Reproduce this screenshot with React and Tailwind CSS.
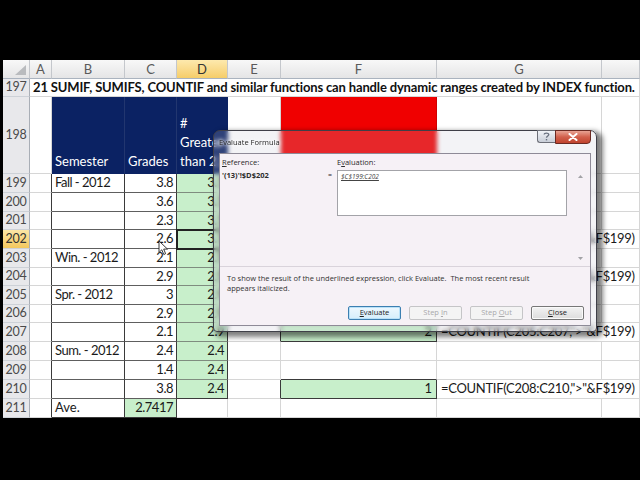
import React from 'react';

const wR = 'w-[27px]';
const wA = 'w-[22px]';
const wB = 'w-[73px]';
const wC = 'w-[52px]';
const wD = 'w-[51px]';
const wE = 'w-[53px]';
const wF = 'w-[156px]';
const wG = 'w-[165px]';
const wH = 'w-[38px]';
const wGH = 'w-[203px]';
const wAH = 'w-[610px]';

const LG = 'border-r-[#d6d6d6]';
const LGB = 'border-b-[#d6d6d6]';
const DK = 'border-r-[#3a3a3a]';
const DKB = 'border-b-[#3a3a3a]';
const MDB = 'border-b-[#5e5e5e]';

function Cell({ w, r = LG, b = LGB, cls = '', children }) {
  return (
    <div
      className={`${w} shrink-0 h-full border-r border-b ${r} ${b} flex items-center whitespace-nowrap overflow-hidden ${cls}`}
    >
      {children}
    </div>
  );
}

function Row({ h, num, sel, children }) {
  return (
    <div className={`flex ${h}`}>
      <Cell
        w={wR}
        r="border-r-[#a9aeb6]"
        b="border-b-[#cdd1d7]"
        cls={
          sel
            ? 'justify-center bg-linear-to-b from-[#fce6a6] to-[#f4c85c] text-[#333] text-[12.5px] tracking-[-0.2px]'
            : 'justify-center bg-[#e8e8eb] text-[#4a4a4a] text-[12.5px] tracking-[-0.2px]'
        }
      >
        {num}
      </Cell>
      {children}
    </div>
  );
}

const rows = [
  { n: 199, h: 'h-[19px]', b: 'Fall - 2012', c: '3.8', d: '3.1', f: '2.5' },
  { n: 200, h: 'h-[19px]', c: '3.6', d: '3.1' },
  { n: 201, h: 'h-[18px]', c: '2.3', d: '3.1' },
  { n: 202, h: 'h-[19px]', c: '2.6', d: '3.1', f: '3', g: '=COUNTIF(C199:C202,">"&F$199)', sel: true },
  { n: 203, h: 'h-[19px]', b: 'Win. - 2012', c: '2.1', d: '2.5' },
  { n: 204, h: 'h-[18px]', c: '2.9', d: '2.5', f: '1', g: '=COUNTIF(C203:C204,">"&F$199)' },
  { n: 205, h: 'h-[19px]', b: 'Spr. - 2012', c: '3', d: '2.9' },
  { n: 206, h: 'h-[18px]', c: '2.9', d: '2.9' },
  { n: 207, h: 'h-[19px]', c: '2.1', d: '2.9', f: '2', g: '=COUNTIF(C205:C207,">"&F$199)' },
  { n: 208, h: 'h-[19px]', b: 'Sum. - 2012', c: '2.4', d: '2.4' },
  { n: 209, h: 'h-[19px]', c: '1.4', d: '2.4' },
  { n: 210, h: 'h-[19px]', c: '3.8', d: '2.4', f: '1', g: '=COUNTIF(C208:C210,">"&F$199)' },
];

function HeadCell({ w, sel, children }) {
  return (
    <Cell
      w={w}
      r="border-r-[#c4c7cc]"
      b="border-b-[#aab3bf]"
      cls={
        sel
          ? 'justify-center pt-[2px] bg-linear-to-b from-[#fde9ad] to-[#f6cd68] text-[#333] text-[13px]'
          : 'justify-center pt-[2px] bg-linear-to-b from-[#f8f8f8] to-[#e5e5e6] text-[#5a5a5a] text-[13px]'
      }
    >
      {children}
    </Cell>
  );
}

function Btn({ w = 'w-[53px]', kind, children }) {
  const k =
    kind === 'focus'
      ? 'border-[#3c7fb1] bg-linear-to-b from-[#eef8fe] to-[#d6eefb] text-[#1e1e1e] shadow-[inset_0_0_0_1px_#b9e1f8]'
      : kind === 'dis'
      ? 'border-[#c5c5c7] bg-[#f4f4f4] text-[#a9a9ab]'
      : 'border-[#777] bg-linear-to-b from-[#f3f3f3] to-[#dcdcdc] text-[#1e1e1e] shadow-[inset_0_0_0_1px_#fafafa]';
  return (
    <div className={`${w} h-[14px] border rounded-[2px] flex items-center justify-center text-[7.5px] leading-none ${k}`}>
      {children}
    </div>
  );
}

function Dialog() {
  return (
    <div className="absolute z-20 left-[213px] top-[130px] w-[384px] h-[202px] rounded-t-[7px] rounded-b-[4px] border border-[#3f3f48] bg-[#c4c2d4]/20 backdrop-blur-[2px] shadow-[4px_3px_5px_2px_rgba(0,0,0,0.5)] flex flex-col px-[5px] pb-[5px] [font-family:'Open_Sans','Noto_Sans',sans-serif]">
      <div className="h-[22px] shrink-0 flex items-start justify-between">
        <span className="pl-[0px] pt-[6px] text-[7.5px] leading-[10px] text-[#1f1f1f] [text-shadow:0_0_5px_#fff,0_0_3px_#fff]">
          Evaluate Formula
        </span>
        <div className="flex -mt-[1px]">
          <div className="w-[18px] h-[13px] rounded-bl-[3px] border border-[#6d6f78] border-r-0 bg-linear-to-b from-[#f1f3f7] to-[#c9ced8] flex items-center justify-center">
            <svg width="7" height="9" viewBox="0 0 7 9">
              <path d="M1.2 2.6 C1.2 0.6 5.8 0.6 5.8 2.6 C5.8 4 3.5 4 3.5 5.8" fill="none" stroke="#6b7280" strokeWidth="1.3" />
              <rect x="2.8" y="7" width="1.4" height="1.4" fill="#6b7280" />
            </svg>
          </div>
          <div className="w-[36px] h-[14px] rounded-br-[4px] border border-[#6b2a22] bg-linear-to-b from-[#e8a394] via-[#d2604c] to-[#c0432d] flex items-center justify-center">
            <svg width="10" height="8" viewBox="0 0 10 8">
              <path d="M1.5 1 L8.5 7 M8.5 1 L1.5 7" stroke="#fff" strokeWidth="2" strokeLinecap="round" />
            </svg>
          </div>
        </div>
      </div>
      <div className="flex-1 bg-[#f6f1f6] border border-[#8e8a97] flex flex-col text-[#2b2b2b]">
        <div className="h-[113px] shrink-0 border-b border-[#d9d3db] flex">
          <div className="w-[107px] shrink-0 pl-[2px] pt-[3px] flex flex-col">
            <span className="text-[7.5px] leading-[10px]">
              <span className="underline">R</span>eference:
            </span>
            <span className="mt-[3px] text-[7.5px] leading-[10px] font-bold">'(13)'!$D$202</span>
          </div>
          <div className="w-[10px] shrink-0 pt-[16px] text-[7px] leading-[10px] pl-[1px]">=</div>
          <div className="w-[230px] shrink-0 pt-[3px] flex flex-col">
            <span className="text-[7.5px] leading-[10px]">
              E<span className="underline">v</span>aluation:
            </span>
            <div className="mt-[3px] h-[46px] bg-white border border-[#a3a3a8] px-[3px] pt-[1px] text-[6.5px] leading-[9px]">
              <span className="italic underline text-[#444]">$C$199:C202</span>
            </div>
          </div>
          <div className="flex-1 flex flex-col items-center justify-between pt-[21px] pb-[6px] pl-[3px]">
            <svg width="5" height="3" viewBox="0 0 5 3">
              <path d="M0 3 L2.5 0 L5 3 Z" fill="#a2a2a6" />
            </svg>
            <svg width="5" height="3" viewBox="0 0 5 3">
              <path d="M0 0 L2.5 3 L5 0 Z" fill="#a2a2a6" />
            </svg>
          </div>
        </div>
        <div className="pl-[7px] pt-[6px] text-[7.5px] leading-[10px] text-[#333]">
          <div>To show the result of the underlined expression, click Evaluate.&nbsp; The most recent result</div>
          <div>appears italicized.</div>
        </div>
        <div className="mt-[13px] flex justify-end gap-[8px] pr-[6px]">
          <Btn kind="focus">
            <span className="underline">E</span>valuate
          </Btn>
          <Btn kind="dis">
            Step&nbsp;<span className="underline">I</span>n
          </Btn>
          <Btn kind="dis">
            Step&nbsp;<span className="underline">O</span>ut
          </Btn>
          <Btn kind="norm">
            <span className="underline">C</span>lose
          </Btn>
        </div>
      </div>
    </div>
  );
}

export default function App() {
  return (
    <div className="relative w-[640px] h-[480px] bg-black overflow-hidden [font-family:Lato,'Open_Sans',sans-serif]">
      <div className="pt-[60px] pl-[3px]">
        <div className="bg-white w-[637px] flex flex-col text-[13px] text-[#1a1a1a]">
          <div className="flex h-[19px]">
            <Cell w={wR} r="border-r-[#c4c7cc]" b="border-b-[#aab3bf]" cls="bg-linear-to-b from-[#f8f8f8] to-[#e5e5e6] justify-end items-end pr-[2px] pb-[2px]">
              <svg width="13" height="12" viewBox="0 0 13 12">
                <path d="M12 1 L12 11 L1 11 Z" fill="#b9bbbe" />
              </svg>
            </Cell>
            <HeadCell w={wA}>A</HeadCell>
            <HeadCell w={wB}>B</HeadCell>
            <HeadCell w={wC}>C</HeadCell>
            <HeadCell w={wD} sel>
              D
            </HeadCell>
            <HeadCell w={wE}>E</HeadCell>
            <HeadCell w={wF}>F</HeadCell>
            <HeadCell w={wG}>G</HeadCell>
            <HeadCell w={wH}></HeadCell>
          </div>
          <Row h="h-[18px]" num={197}>
            <Cell w={wAH} cls="font-bold pl-[3px] text-[#111] tracking-[-0.15px]">
              21 SUMIF, SUMIFS, COUNTIF and similar functions can handle dynamic ranges created by INDEX function.
            </Cell>
            <Cell w="w-[5px]" />
          </Row>
          <Row h="h-[77px]" num={198}>
            <Cell w={wA} />
            <Cell w={wB} r="border-r-[#22366f]" b="border-b-[#0b2263]" cls="bg-[#0b2263] text-white items-end pl-[3px] leading-[19px] pb-[2px]">
              Semester
            </Cell>
            <Cell w={wC} r="border-r-[#22366f]" b="border-b-[#0b2263]" cls="bg-[#0b2263] text-white items-end pl-[3px] leading-[19px] pb-[2px]">
              Grades
            </Cell>
            <Cell w={wD} r="border-r-[#0b2263]" b="border-b-[#0b2263]" cls="bg-[#0b2263] text-white items-end pl-[3px] leading-[19px] pb-[2px]">
              <div className="flex flex-col">
                <span>#</span>
                <span>Greater</span>
                <span>than 2.5</span>
              </div>
            </Cell>
            <Cell w={wE} />
            <Cell w={wF} r="border-r-[#d00000]" b="border-b-[#d6d6d6]" cls="bg-[#f00000]" />
            <Cell w={wG} />
            <Cell w={wH} />
          </Row>
          {rows.map((r, i) => {
            const next = rows[i + 1];
            const fGreen = !!r.g;
            const last = i === rows.length - 1;
            return (
              <Row key={r.n} h={r.h} num={r.n} sel={r.sel}>
                <Cell w={wA} r={DK} />
                <Cell w={wB} r={DK} b={MDB} cls="pl-[3px] tracking-[-0.5px]">
                  {r.b || ''}
                </Cell>
                <Cell w={wC} r={DK} b={MDB} cls="justify-end pr-[3px] tracking-[-0.5px]">
                  {r.c}
                </Cell>
                <Cell
                  w={wD}
                  r={DK}
                  b={last ? DKB : 'border-b-[#7f8c7f]'}
                  cls={`justify-end pr-[3px] tracking-[-0.5px] bg-[#c8efcb] ${r.sel ? 'relative z-10 outline-2 outline-[#222] -outline-offset-1' : ''}`}
                >
                  {r.d}
                </Cell>
                <Cell w={wE} r={fGreen ? DK : LG} />
                <Cell
                  w={wF}
                  r={fGreen ? DK : LG}
                  b={fGreen || (next && next.g) ? DKB : LGB}
                  cls={`justify-end pr-[4px] ${fGreen ? 'bg-[#c8efcb]' : ''}`}
                >
                  {r.f || ''}
                </Cell>
                {r.g ? (
                  <Cell w={wGH} cls="pl-[4px] tracking-[-0.3px]">
                    {r.g}
                  </Cell>
                ) : (
                  <>
                    <Cell w={wG} />
                    <Cell w={wH} />
                  </>
                )}
              </Row>
            );
          })}
          <Row h="h-[19px]" num={211}>
            <Cell w={wA} r={DK} />
            <Cell w={wB} r={DK} b={DKB} cls="pl-[3px]">
              Ave.
            </Cell>
            <Cell w={wC} r={DK} b={DKB} cls="justify-end pr-[3px] bg-[#c8efcb] tracking-[-0.5px]">
              2.7417
            </Cell>
            <Cell w={wD} />
            <Cell w={wE} />
            <Cell w={wF} />
            <Cell w={wG} />
            <Cell w={wH} />
          </Row>
        </div>
      </div>

      <Dialog />

      <svg className="absolute left-[158px] top-[240px]" width="11" height="16" viewBox="0 0 11 16">
        <path d="M1 1 L1 12.5 L3.8 9.8 L5.8 14.5 L7.6 13.7 L5.7 9.1 L9.5 9.1 Z" fill="#fff" stroke="#222" strokeWidth="0.9" strokeLinejoin="round" />
      </svg>
    </div>
  );
}
